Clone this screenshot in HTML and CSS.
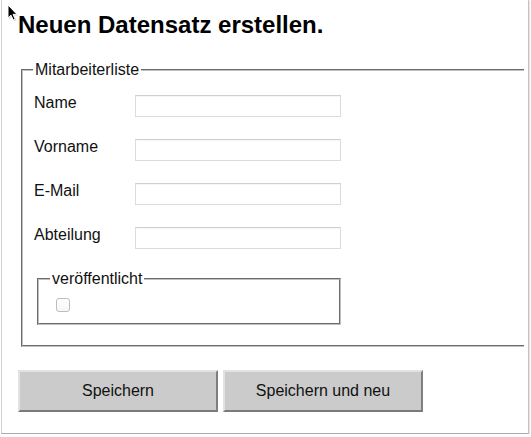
FILE: index.html
```html
<!DOCTYPE html>
<html lang="de">
<head>
<meta charset="utf-8">
<title>Neuen Datensatz erstellen</title>
<link rel="stylesheet" href="styles.css">
</head>
<body>
<div class="window">
  <div class="viewport">
    <h2 class="title">Neuen Datensatz erstellen.</h2>
    <form class="form">
      <fieldset class="group">
        <legend class="group-legend">Mitarbeiterliste</legend>
        <div class="row"><label class="label">Name</label><input class="field" type="text"></div>
        <div class="row"><label class="label">Vorname</label><input class="field" type="text"></div>
        <div class="row"><label class="label">E-Mail</label><input class="field" type="text"></div>
        <div class="row"><label class="label">Abteilung</label><input class="field" type="text"></div>
        <fieldset class="sub">
          <legend class="sub-legend">veröffentlicht</legend>
          <input class="check" type="checkbox">
        </fieldset>
      </fieldset>
      <div class="actions">
        <button class="btn" type="button">Speichern</button>
        <button class="btn" type="button">Speichern und neu</button>
      </div>
    </form>
  </div>
  <svg class="cursor" width="13" height="18" viewBox="0 0 13 18" aria-hidden="true">
    <path d="M2.2 2.2 L2.2 15.2 L5.2 12.4 L7.4 17.2 L9.4 16.3 L7.2 11.6 L11.2 11.6 Z" fill="rgba(0,0,0,0.18)"/>
    <path d="M1 1 L1 14 L4 11.2 L6.2 16 L8.2 15.1 L6 10.4 L10 10.4 Z" fill="#000" stroke="#fff" stroke-width="1" stroke-linejoin="round"/>
  </svg>
</div>
</body>
</html>
```

FILE: styles.css
```css
html, body {
  margin: 0;
  padding: 0;
  background: #ffffff;
}

body {
  font-family: "Liberation Sans", Arial, Helvetica, sans-serif;
  color: #111;
}

.window {
  position: relative;
  margin-left: 1px;
  width: 526px;
  height: 433px;
  border-left: 1px solid #d2d2d2;
  border-right: 1px solid #c4c4c4;
  border-bottom: 1px solid #a9a9a9;
  box-shadow: 1px 1px 0 #e4e4e4;
  background: #fff;
}

.viewport {
  width: 522px;
  height: 433px;
  padding-left: 16px;
  box-sizing: border-box;
  overflow: hidden;
}

.title {
  margin: 11px 0 22px;
  font-size: 24px;
  line-height: 28px;
  font-weight: bold;
  color: #000;
}

.form {
  margin: 0;
}

.group {
  margin: 0 -10px 0 3px;
  padding: 15px 12px 20px 11px;
  border: 2px groove #c0c0c0;
  min-width: 0;
}

.group-legend,
.sub-legend {
  padding: 0 2px;
  font-size: 16px;
  line-height: 18px;
  color: #111;
}

.group-legend {
  margin-left: -1px;
}

.row {
  display: flex;
  align-items: flex-start;
  margin-bottom: 21px;
}

.label {
  width: 101px;
  flex: none;
  font-size: 16px;
  line-height: 18px;
}

.field {
  width: 206px;
  height: 22px;
  margin: 1px 0 0;
  padding: 1px 3px;
  box-sizing: border-box;
  border: 1px solid #dcdcdc;
  border-top-color: #cfcfcf;
  box-shadow: inset 0 1px 1px rgba(0, 0, 0, 0.04);
  background: #fff;
  font: 13px "Liberation Sans", Arial, sans-serif;
}

.sub {
  width: 304px;
  box-sizing: border-box;
  margin: 0 0 0 3px;
  padding: 10px 11px 11px 11px;
  border: 2px groove #c0c0c0;
  min-width: 0;
}

.check {
  -webkit-appearance: none;
  appearance: none;
  display: block;
  width: 14px;
  height: 14px;
  margin: 0 0 0 6px;
  border: 1px solid #bdbdbd;
  border-radius: 3px;
  background: linear-gradient(#ffffff, #f7f7f7);
  box-sizing: border-box;
}

.actions {
  display: flex;
  gap: 5px;
  margin-top: 23px;
}

.btn {
  width: 200px;
  height: 42px;
  padding: 0;
  background: #cbcbcb;
  border-style: solid;
  border-width: 2px;
  border-color: #e2e2e2 #7f7f7f #7a7a7a #e2e2e2;
  font: 16px "Liberation Sans", Arial, sans-serif;
  color: #111;
}

.cursor {
  position: absolute;
  left: 5px;
  top: 4px;
}
```
